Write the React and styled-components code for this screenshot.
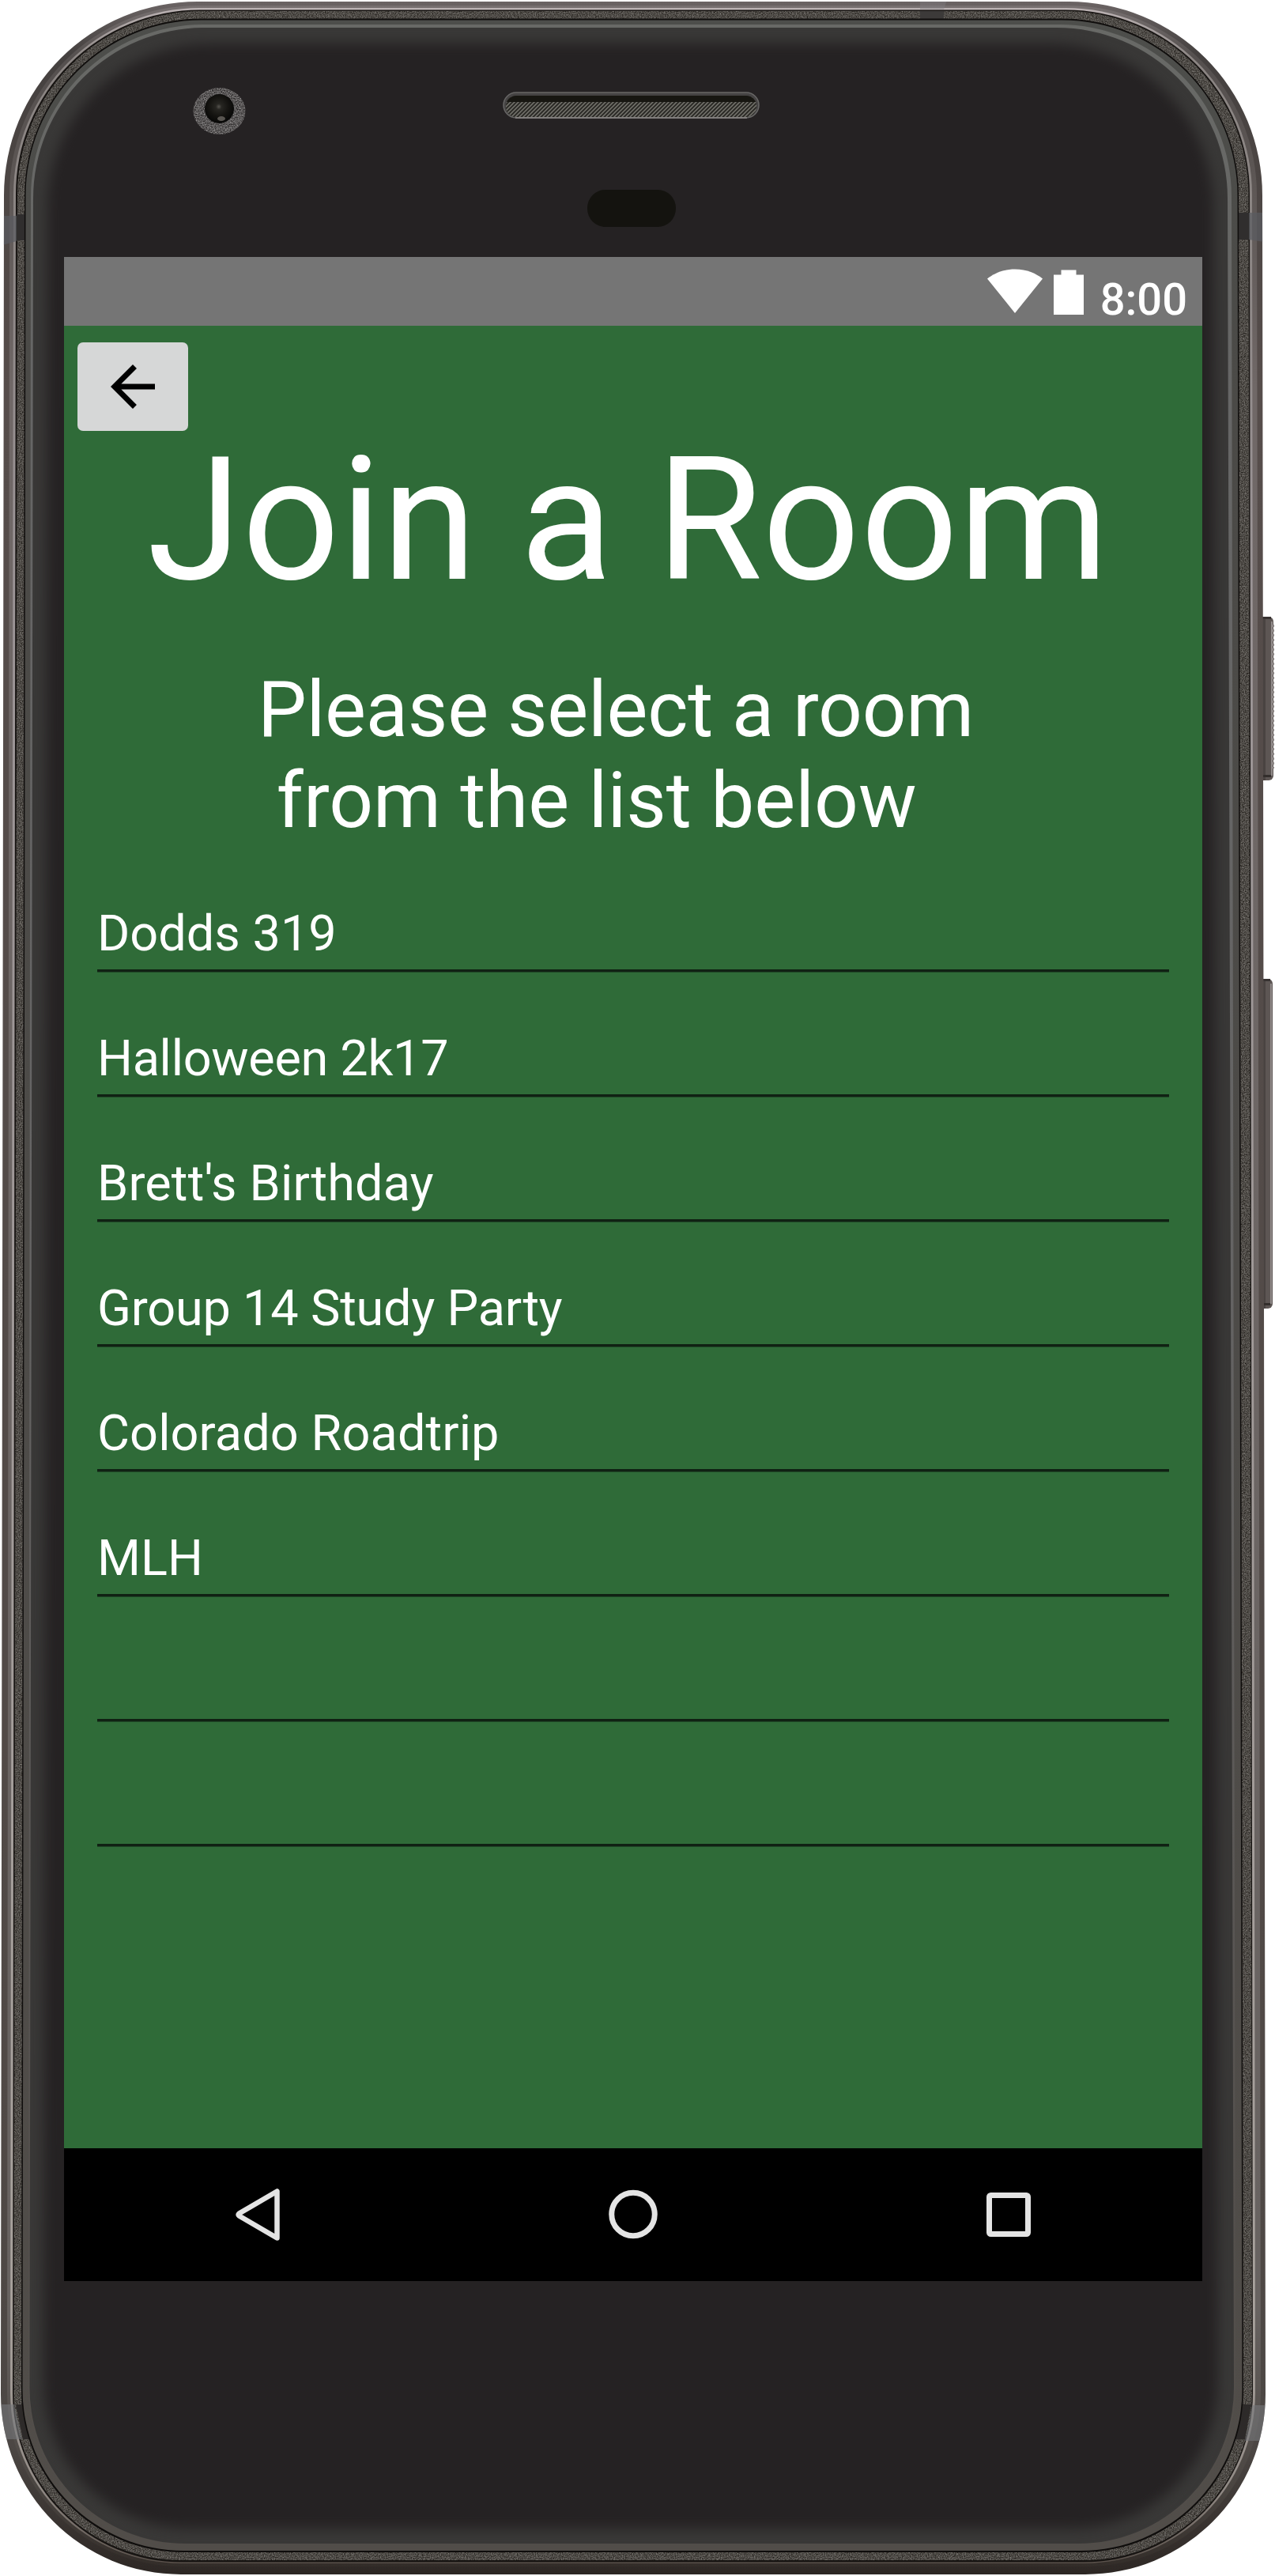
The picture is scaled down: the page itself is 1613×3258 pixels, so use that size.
import React from 'react';
import styled, { createGlobalStyle } from 'styled-components';

const GlobalStyle = createGlobalStyle`
  html, body { margin: 0; padding: 0; background: #fff; }
  * { box-sizing: border-box; }
`;

const Device = styled.div`
  position: relative;
  width: 1613px;
  height: 3258px;
  padding: 325px 92px 373px 81px;
  overflow: hidden;
  font-family: Roboto, "Liberation Sans", sans-serif;
`;

const Shell = styled.svg`
  position: absolute;
  inset: 0;
  display: block;
`;

const Screen = styled.div`
  position: relative;
  display: flex;
  flex-direction: column;
  width: 1440px;
  height: 2560px;
  color: #fff;
  background: #2f6b38;
`;

const StatusBar = styled.header`
  display: flex;
  flex: none;
  height: 87px;
  padding: 15px 19px 0 0;
  justify-content: flex-end;
  align-items: flex-start;
  background: #757575;
`;

const StatusIcon = styled.svg`
  display: block;
  flex: none;
  margin-right: ${(p) => p.$gap}px;
`;

const Clock = styled.span`
  font-size: 56px;
  font-weight: 500;
  line-height: 66px;
  margin-top: 6px;
`;

const Content = styled.main`
  display: flex;
  flex: 1;
  flex-direction: column;
  align-items: flex-start;
  padding: 21px 42px 0 17px;
`;

const BackButton = styled.button`
  display: flex;
  align-items: center;
  justify-content: center;
  width: 140px;
  height: 112px;
  padding: 0;
  border: 0;
  border-radius: 7px;
  background: #d6d7d7;
`;

const Title = styled.h1`
  margin: -14px 0 0 88px;
  font-size: 217px;
  font-weight: 400;
  line-height: 254px;
  letter-spacing: 0.35px;
  white-space: nowrap;
`;

const Subtitle = styled.p`
  width: 910px;
  margin: 55px 0 0 226px;
  font-size: 98px;
  line-height: 115px;
  text-align: center;
  white-space: pre;
`;

const SubtitleLine = styled.span`
  display: block;
  letter-spacing: ${(p) => p.$tracking}px;
`;

const RoomList = styled.ul`
  display: flex;
  flex-direction: column;
  width: 1356px;
  margin: 2px 0 0 25px;
  padding: 0;
  list-style: none;
`;

const Room = styled.li`
  height: 157px;
  margin-bottom: 1px;
  padding-top: 72px;
  border-bottom: 3px solid #102113;
  box-shadow: 0 1px 0 #1f4626;
  font-size: 63px;
  line-height: 74px;
  letter-spacing: ${(p) => p.$tracking}px;
  white-space: pre;
`;

const NavBar = styled.nav`
  display: flex;
  flex: none;
  align-items: center;
  justify-content: space-between;
  height: 168px;
  padding: 0 203px;
  background: #000;
`;

const NavIcon = styled.svg`
  display: block;
`;

/* Outline of the tapered body: the sides lean outwards from top to bottom. */
const outline = ({ lt, lb, rt, rb, t, b, r, q }) =>
  `M${lt + r} ${t} H${rt - r} A${r} ${r} 0 0 1 ${rt} ${t + r} L${rb} ${b - q} ` +
  `A${q} ${q} 0 0 1 ${rb - q} ${b} H${lb + q} A${q} ${q} 0 0 1 ${lb} ${b - q} L${lt} ${t + r} ` +
  `A${r} ${r} 0 0 1 ${lt + r} ${t} Z`;

const layers = [
  { fill: 'url(#metal)', lt: 5, lb: 1, rt: 1597, rb: 1601, t: 2, b: 3256, r: 245, q: 228 },
  { fill: 'url(#metalMid)', lt: 12, lb: 9, rt: 1590, rb: 1595, t: 7, b: 3246, r: 239, q: 220 },
  { fill: 'url(#shine)', lt: 17, lb: 13, rt: 1584, rb: 1588, t: 10, b: 3242, r: 236, q: 216 },
  { fill: '#171412', lt: 20, lb: 16, rt: 1581, rb: 1585, t: 12.5, b: 3240.5, r: 233, q: 214 },
  { fill: '#4b4742', grain: true, lt: 22, lb: 17.5, rt: 1579.5, rb: 1584, t: 14, b: 3238, r: 232, q: 212 },
  { fill: '#0f0d0c', lt: 31, lb: 27, rt: 1567, rb: 1573, t: 23.5, b: 3228, r: 224, q: 205 },
  { fill: 'url(#rim)', lt: 32.5, lb: 28.5, rt: 1565.5, rb: 1571.5, t: 25.5, b: 3226, r: 222, q: 204 },
  { fill: 'url(#rimShine)', lt: 39, lb: 36, rt: 1558, rb: 1563, t: 31, b: 3218, r: 218, q: 198 },
  { fill: '#393837', lt: 42, lb: 37.5, rt: 1553, rb: 1561, t: 35, b: 3217, r: 216, q: 197 },
];

const glass = { lt: 60, lb: 55, rt: 1535, rb: 1541, t: 55, b: 3198, r: 208, q: 185 };

const VGradient = ({ id, stops }) => (
  <linearGradient id={id} x1="0" y1="0" x2="0" y2="1">
    {stops.map(([offset, color]) => <stop key={offset} offset={offset} stopColor={color} />)}
  </linearGradient>
);

const SideButton = ({ y, height, width, ridged }) => (
  <g>
    <rect x="1590" y={y} width={width + 7} height={height} rx="6" fill="#5d5654" />
    <rect x="1597" y={y} width="4" height={height} fill="#494341" />
    <rect x={1594 + width} y={y + 6} width="2" height={height - 12} fill="#918b8a" />
    <rect x="1597" y={y} width={width - 3} height="3" fill="#373231" />
    <rect x="1597" y={y + height - 7} width={width - 3} height="3" fill="#332e2c" />
    {ridged && <path d={`M1611 ${y + 10}V${y + height - 15}`} stroke="#8b8584" strokeWidth="2" strokeDasharray="3 3" />}
  </g>
);

const PhoneShell = () => (
  <Shell width="1613" height="3258" viewBox="0 0 1613 3258" aria-hidden="true">
    <defs>
      <VGradient id="metal" stops={[[0, '#6b6464'], [0.02, '#454140'], [0.06, '#4b4543'], [0.15, '#564d4b'], [0.8, '#504946'], [0.95, '#4c4744'], [1, '#2d2724']]} />
      <VGradient id="metalMid" stops={[[0, '#777070'], [0.02, '#55504f'], [0.06, '#5b5553'], [0.15, '#706867'], [0.9, '#686361'], [0.97, '#4a4541'], [1, '#332d29']]} />
      <VGradient id="shine" stops={[[0, '#bbb2b3'], [0.02, '#8b8583'], [0.08, '#8b8583'], [0.2, '#9a9395'], [0.9, '#a8a29d'], [0.97, '#928b86'], [1, '#5a514b']]} />
      <VGradient id="rim" stops={[[0, '#4d4e4b'], [0.15, '#4b4a47'], [0.5, '#4d4b48'], [1, '#514d49']]} />
      <VGradient id="rimShine" stops={[[0, '#686966'], [0.15, '#666666'], [0.5, '#656464'], [0.85, '#55514e'], [1, '#514d49']]} />
      <radialGradient id="lens" cx="0.48" cy="0.43" r="0.55">
        <stop offset="0" stopColor="#55534e" />
        <stop offset="0.18" stopColor="#272622" />
        <stop offset="0.6" stopColor="#151411" />
        <stop offset="1" stopColor="#080807" />
      </radialGradient>
      <filter id="soften" x="-5%" y="-5%" width="110%" height="110%" colorInterpolationFilters="sRGB">
        <feGaussianBlur stdDeviation="8" />
      </filter>
      <filter id="grain" x="0" y="0" width="100%" height="100%" colorInterpolationFilters="sRGB">
        <feTurbulence type="fractalNoise" baseFrequency="0.7" numOctaves="2" seed="4" result="noise" />
        <feColorMatrix in="noise" type="matrix" values="0.55 0 0 0 0.03  0.55 0 0 0 0.017  0.55 0 0 0 0  0 0 0 0 1" />
        <feComposite in2="SourceGraphic" operator="in" />
      </filter>
      <filter id="cameraGrain" x="0" y="0" width="100%" height="100%" colorInterpolationFilters="sRGB">
        <feTurbulence type="fractalNoise" baseFrequency="0.7" numOctaves="2" seed="7" result="noise" />
        <feColorMatrix in="noise" type="matrix" values="0.75 0 0 0 -0.02  0.75 0 0 0 -0.03  0.75 0 0 0 -0.03  0 0 0 0 1" />
        <feComposite in2="SourceGraphic" operator="in" />
      </filter>
      <pattern id="mesh" width="5" height="5" patternUnits="userSpaceOnUse">
        <rect width="5" height="5" fill="#2b2a26" />
        <path d="M-1 6L6 -1M-1 1L1 -1M4 6L6 4" stroke="#77766f" strokeWidth="1.5" />
      </pattern>
      <clipPath id="glassEdge"><path d={outline(layers[8])} /></clipPath>
      <clipPath id="bodyEdge"><path d={outline(layers[0])} /></clipPath>
      <clipPath id="grilleEdge"><rect x="640" y="121" width="317" height="27" rx="13" /></clipPath>
    </defs>

    <SideButton y={780} height={207} width={14} ridged />
    <SideButton y={1238} height={417} width={13} />

    {layers.slice(0, 5).map((l, i) => (
      <path key={i} d={outline(l)} fill={l.fill} filter={l.grain ? 'url(#grain)' : undefined} />
    ))}
    <g clipPath="url(#bodyEdge)">
      <path d="M0 273H21V305L0 311ZM1580 269H1613V308L1580 303Z" fill="#5a5b61" opacity="0.7" />
      <path d="M21 271H34V304H21ZM1566 269H1580V303H1566Z" fill="#302e2e" />
      <path d="M0 3041H18L28 3085H0ZM1584 3042H1613V3087H1575Z" fill="#77787c" opacity="0.6" />
      <path d="M20 3041H33L40 3085H29ZM1571 3041H1583L1575 3085H1563Z" fill="#2d2a29" />
      <path d="M1164 0H1198L1194 12H1164Z" fill="#817f85" opacity="0.4" />
      <path d="M1164 14H1194V24H1164Z" fill="#3c3a39" />
    </g>
    {layers.slice(5).map((l, i) => <path key={i} d={outline(l)} fill={l.fill} />)}
    <g clipPath="url(#glassEdge)">
      <path d={outline(glass)} fill="#252223" filter="url(#soften)" />
    </g>

    <ellipse cx="277.5" cy="140.5" rx="33" ry="29.5" fill="#5a5856" filter="url(#cameraGrain)" />
    <circle cx="277.5" cy="137.5" r="18.5" fill="url(#lens)" />
    <ellipse cx="280" cy="150" rx="5" ry="3" fill="#77746d" opacity="0.7" />

    <rect x="637" y="117" width="323" height="32" rx="16" fill="#454343" stroke="#686766" strokeWidth="1.5" />
    <g clipPath="url(#grilleEdge)">
      <rect x="640" y="122" width="317" height="27" fill="url(#mesh)" />
      <rect x="640" y="121" width="317" height="8" fill="#171611" />
    </g>
    <path d="M652 149H945" stroke="#8c8a88" strokeWidth="1.5" />
    <rect x="743" y="240" width="112" height="47" rx="23" fill="#14130f" />
  </Shell>
);

const rooms = [
  { name: 'Dodds 319', tracking: 0 },
  { name: 'Halloween 2k17', tracking: -0.3 },
  { name: "Brett's Birthday", tracking: 0.15 },
  { name: 'Group 14 Study Party', tracking: -0.2 },
  { name: 'Colorado Roadtrip', tracking: 0.1 },
  { name: 'MLH', tracking: 0 },
  { name: '', tracking: 0 },
  { name: '', tracking: 0 },
];

export default function App() {
  return (
    <>
      <GlobalStyle />
      <Device>
        <PhoneShell />
        <Screen>
          <StatusBar>
            <StatusIcon $gap={14} width="70" height="56" viewBox="0 0 70 56">
              <path d="M35 56L0 12.5C8 6 20 0.5 35 0.5S62 6 70 12.5Z" fill="#fff" />
            </StatusIcon>
            <StatusIcon $gap={21} width="38" height="58" viewBox="0 0 38 58">
              <path d="M9.5 1.5H28.5V7.5H38V58H0V7.5H9.5Z" fill="#fff" />
            </StatusIcon>
            <Clock>8:00</Clock>
          </StatusBar>
          <Content>
            <BackButton aria-label="Back">
              <svg width="84" height="84" viewBox="0 0 24 24">
                <path d="M20 11H7.83l5.59-5.59L12 4l-8 8 8 8 1.41-1.41L7.83 13H20z" />
              </svg>
            </BackButton>
            <Title>Join a Room</Title>
            <Subtitle>
              <SubtitleLine $tracking={-0.27}>Please select a room</SubtitleLine>
              <SubtitleLine $tracking={0}>{'from the list below\u00a0\u00a0'}</SubtitleLine>
            </Subtitle>
            <RoomList>
              {rooms.map(({ name, tracking }, i) => <Room key={i} $tracking={tracking}>{name}</Room>)}
            </RoomList>
          </Content>
          <NavBar>
            <NavIcon width="84" height="84" viewBox="0 0 84 84">
              <path d="M66.500 12.500V71.500L18.500 43.500Q16.500 42 18.500 40.500Z" fill="none" stroke="#e4e4e4" strokeWidth="6.500" strokeLinejoin="round" />
            </NavIcon>
            <NavIcon width="84" height="84" viewBox="0 0 84 84">
              <circle cx="42" cy="41.500" r="27.250" fill="none" stroke="#e4e4e4" strokeWidth="7" />
            </NavIcon>
            <NavIcon width="84" height="84" viewBox="0 0 84 84">
              <rect x="17.500" y="17.500" width="49" height="49" rx="2" fill="none" stroke="#e4e4e4" strokeWidth="7" />
            </NavIcon>
          </NavBar>
        </Screen>
      </Device>
    </>
  );
}
